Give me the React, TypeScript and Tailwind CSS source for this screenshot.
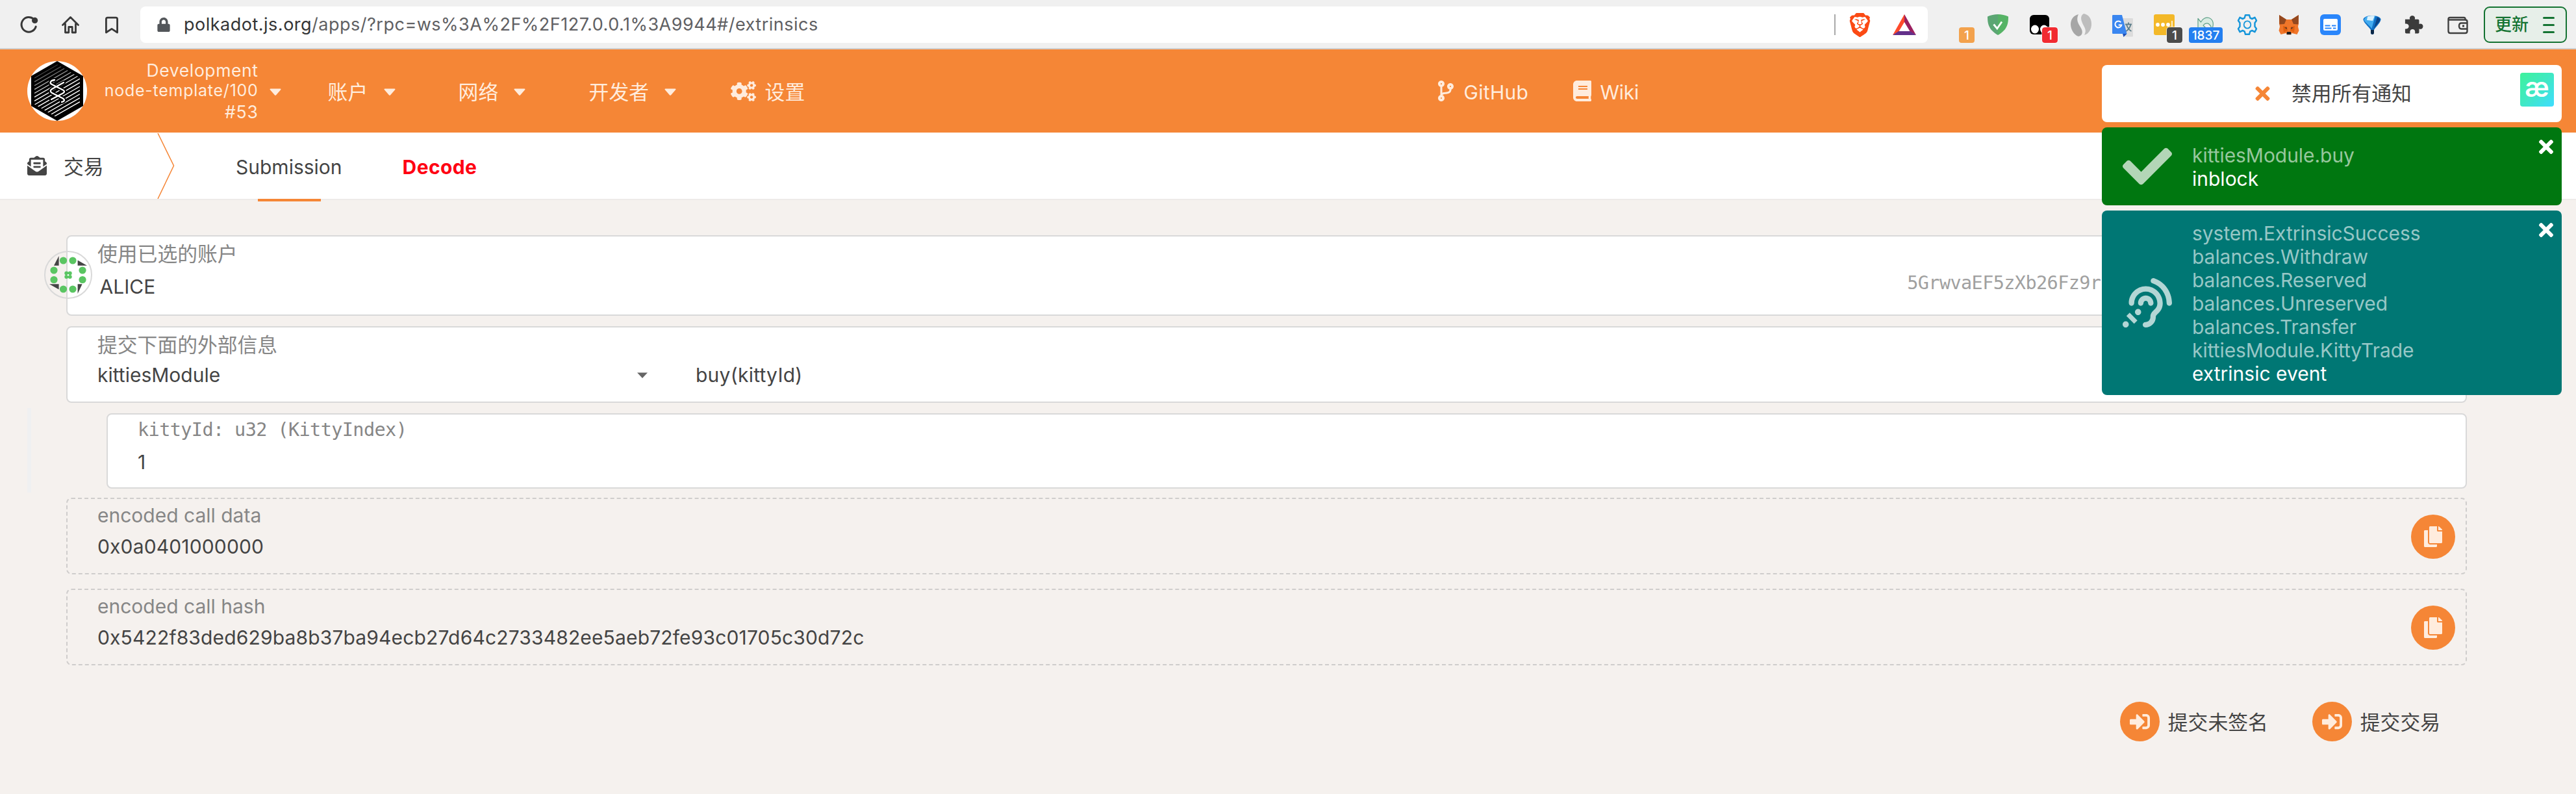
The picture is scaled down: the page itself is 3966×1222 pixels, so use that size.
import React from 'react';
import {
  FaAssistiveListeningSystems,
  FaBook,
  FaCheck,
  FaCodeBranch,
  FaCogs,
  FaCopy,
  FaEnvelopeOpenText,
  FaLock,
  FaSignInAlt,
  FaTimes,
} from 'react-icons/fa';
import { SiBrave } from 'react-icons/si';

const MONO = "font-['DejaVu_Sans_Mono',monospace] text-[28.5px] tracking-[-0.59px]";

/* ---------- browser toolbar ---------- */

function Slot({ children, className = '' }: { children?: React.ReactNode; className?: string }) {
  return <div className={`relative flex h-[76px] w-16 shrink-0 items-center justify-center ${className}`}>{children}</div>;
}

function Badge({ text, className }: { text: string; className: string }) {
  return (
    <span
      className={`absolute top-[42px] flex h-6 items-center justify-center rounded-[4px] pt-0.5 text-[19px] leading-6 font-medium text-white ${className}`}
    >
      {text}
    </span>
  );
}

function Toolbar() {
  return (
    <div className="flex h-[76px] items-center border-b-2 border-[#d0d0d0] bg-[#f0f0f0] pt-0.5">
      <svg className="ml-[29px] h-8 w-8 shrink-0" viewBox="0 0 32 32" fill="none">
        <path d="M23 7.500A11.300 11.300 0 1 0 26.200 19" stroke="#383838" strokeWidth="3" strokeLinecap="round" />
        <circle cx="24.6" cy="9.4" r="4.6" fill="#383838" />
      </svg>
      <svg
        className="ml-[32px] h-8 w-8 shrink-0"
        viewBox="0 0 32 32"
        fill="none"
        stroke="#383838"
        strokeWidth="2.8"
        strokeLinejoin="round"
        strokeLinecap="round"
      >
        <path d="M3.500 16.500 15.500 4.500 27.500 16.500M7.500 14v14h5.300v-8.500h5.400V28h5.300V14" />
      </svg>
      <svg className="ml-[32px] h-8 w-8 shrink-0" viewBox="0 0 32 32" fill="none" stroke="#383838" strokeWidth="2.8" strokeLinejoin="round">
        <path d="M6.400 7.400c0-1.500.8-2.300 2.300-2.300h12.600c1.500 0 2.300.8 2.300 2.300V28l-8.600-5.600L6.400 28Z" />
      </svg>

      <div className="ml-[27px] flex h-14 w-[2752px] shrink-0 items-center rounded-[8px] bg-white pr-[18px] pl-[26px]">
        <FaLock className="h-[22px] w-5 shrink-0 text-[#53565a]" />
        <span className="ml-[21px] text-[27px] leading-[40px] tracking-[0.5px] whitespace-nowrap text-[#5f6063]">
          <span className="text-[#333435]">polkadot.js.org</span>/apps/?rpc=ws%3A%2F%2F127.0.0.1%3A9944#/extrinsics
        </span>
        <span className="ml-auto h-8 w-0.5 bg-[#a9a9a9]" />
        <SiBrave className="ml-[19px] h-[37px] w-[37px] shrink-0 text-[#fb4a14]" />
        <svg className="ml-[32px] h-8 w-9 shrink-0" viewBox="0 0 36 32">
          <path d="M18 0 0 32l9-5 9-15Z" fill="#ff4a2b" />
          <path d="M18 0v12l9 15 9 5Z" fill="#9b1f5f" />
          <path d="M0 32h36l-9-6H9Z" fill="#63308a" />
        </svg>
      </div>

      <Slot className="ml-3">
        <Badge text="1" className="left-9 w-6 bg-[#f3a24d]" />
      </Slot>
      <Slot>
        <svg className="h-8 w-8" viewBox="0 0 32 32">
          <path d="M16 0C10.500 0 4.500 1.300 0 3.500c0 10 1 20 16 28.500Z" fill="#5ba673" />
          <path d="M16 0c5.500 0 11.500 1.300 16 3.500 0 10-1 20-16 28.500Z" fill="#56b366" />
          <path d="m9.500 15.500 5.300 6.500L22 11.500" fill="none" stroke="#fff" strokeWidth="2.8" />
        </svg>
      </Slot>
      <Slot>
        <svg className="h-8 w-8" viewBox="0 0 32 32">
          <rect x="1" y="1" width="30" height="30" rx="6" fill="#000" />
          <ellipse cx="9" cy="23" rx="6" ry="6.5" fill="#fff" />
          <ellipse cx="23" cy="23" rx="6" ry="6.5" fill="#fff" />
        </svg>
        <Badge text="1" className="left-9 w-6 bg-[#f12b31] outline-1 outline-white/60" />
      </Slot>
      <Slot>
        <svg className="h-[35px] w-8" viewBox="0 0 32 35">
          <path d="M12 1C4 3 0 9 0 16.500S5 33 12 35c5-1 7-5 5-10.500C14 17 7 12 12 1Z" fill="#a6a6a6" />
          <path d="M20 0c8 1.500 12 8 12 16s-4 15-11 17c3-6 2-9-1-14.500S13 4 20 0Z" fill="#bdbdbd" />
        </svg>
      </Slot>
      <Slot>
        <svg className="h-[37px] w-8" viewBox="0 0 32 37">
          <path d="M13 8h17.500c1 0 1.500.5 1.500 1.500V35c0 1-.5 1.500-1.500 1.500H20Z" fill="#dcdcdc" />
          <path
            d="M20 17.500h10M25 14.500v3M28.500 17.500c-1 5-4.500 9-8 11M22 18c1.500 4.500 4.500 8.500 7.500 10"
            fill="none"
            stroke="#5d7f8c"
            strokeWidth="1.8"
          />
          <path d="M1.500 3H15l7.500 29H1.500C.5 32 0 31.500 0 30.500v-26C0 3.500.5 3 1.500 3Z" fill="#3a86f0" />
          <path d="m16 32h6.500L17.500 37Z" fill="#1e4fb5" />
          <path d="M13.300 14.300a5 5 0 1 0 1 4.200H9.700" fill="none" stroke="#fff" strokeWidth="2" />
        </svg>
      </Slot>
      <Slot>
        <svg className="h-8 w-8" viewBox="0 0 32 32">
          <rect width="32" height="32" rx="3" fill="#f3b828" />
          <circle cx="6" cy="16" r="2.9" fill="#fff" />
          <circle cx="14" cy="16" r="2.9" fill="#fff" />
          <circle cx="22" cy="16" r="2.9" fill="#fff" />
          <path d="M28 10v9" stroke="#fff" strokeWidth="1.5" />
        </svg>
        <Badge text="1" className="left-9 w-6 bg-[#4b4b4b] outline-1 outline-white/60" />
      </Slot>
      <Slot>
        <svg className="-mt-1 h-[26px] w-[26px]" viewBox="0 0 26 26" strokeLinejoin="round">
          <path
            d="M1 5.500V21h13l-5-5c4-5 9-4 12 2 .8 2 1 3 1 5 4-8 3-16-4-18.500C13 3 8 6 5.500 11Z"
            fill="#d9ebe2"
            stroke="#5fa088"
            strokeWidth="1.2"
          />
        </svg>
        <Badge text="1837" className="left-1.5 w-[52px] bg-[#247ff0]" />
      </Slot>
      <Slot>
        <svg className="h-[36px] w-[34px]" viewBox="0 0 34 34" fill="none" stroke="#1495da" strokeWidth="2.4" strokeLinejoin="round" preserveAspectRatio="none">
          <path d="M14 3h6l1.300 4.200 3 1.300L28.500 6.500 31 11l-2.500 3.500v5L31 23l-2.500 4.500-4.200-2-3 1.300L20 31h-6l-1.300-4.200-3-1.300-4.200 2L3 23l2.500-3.500v-5L3 11l2.500-4.500 4.200 2 3-1.300Z" />
          <circle cx="17" cy="17" r="5.3" strokeWidth="1.8" />
        </svg>
      </Slot>
      <Slot>
        <svg className="h-8 w-8" viewBox="0 0 32 32">
          <path d="M1 1 12 8h8L31 1v13l-1 5 1.500 6-3 6-8-2-2 2h-5l-2-2-8 2-3-6L2 19l-1-5Z" fill="#f0762a" />
          <path d="M1 1 12 8 9 15 1.500 15.500ZM31 1 20 8l3 7 7.500.5Z" fill="#93481f" />
          <path d="m7 18 6 1 1 6-6 3ZM25 18l-6 1-1 6 6 3Z" fill="#e2600f" />
          <path d="m9 20 4 .5-.5 2.500ZM23 20l-4 .5.500 2.500Z" fill="#47342c" />
          <path d="M13 27h6l.5 4h-7Z" fill="#1d1d20" />
          <path d="M12 31h8l-1 1h-6Z" fill="#cdb9ac" />
        </svg>
      </Slot>
      <Slot>
        <svg className="h-8 w-8" viewBox="0 0 32 32">
          <rect width="32" height="32" rx="6" fill="#2a86fb" />
          <rect x="5" y="7" width="22" height="18" rx="2" fill="#fff" />
          <path d="M7.500 17.500h8M18 17.500h6.500M7.500 21.500h10M20 21.500h4.500" stroke="#2a86fb" strokeWidth="1.8" />
        </svg>
      </Slot>
      <Slot>
        <svg className="h-[30px] w-7" viewBox="0 0 28 30">
          <path d="M5 2.500C10 .5 18 .5 23 2.500c3 1.200 5 3 4.500 5C26 13 21 17 17 23v4c0 2-1 3-2.500 3S12 29 12 27v-4C8 17 2 13 .5 7.500.2 5.500 2 3.700 5 2.500Z" fill="#0f6fc4" />
          <path d="M4 3.500C8 1.500 14 1 19 1.500L16 12l-2.500 9C9 15 3 11.500 1.500 7.500Z" fill="#43acf0" />
          <path d="M7 2.500C11 1 15 1 18 1.500L15 9 6 8Z" fill="#dcf2fd" />
          <path d="M22 3.500c4 1.500 4.500 3 4 5C24.500 13 19 16.500 16.500 22Z" fill="#0b4386" />
          <path d="M12 23h5v4c0 2-1 3-2.500 3S12 29 12 27Z" fill="#0b2746" />
        </svg>
      </Slot>
      <Slot>
        <svg className="h-8 w-8" viewBox="0 0 32 32">
          <path
            d="M4 9h7.500a4.200 4.200 0 1 1 7.600 0H24c1.300 0 2 .8 2 2v5.300a4.200 4.200 0 1 1 0 7.400V29c0 1.300-.7 2-2 2h-4.500c.8-4.500-1-6.500-3.800-6.500S11 26.500 11.800 31H6c-1.300 0-2-.7-2-2v-5c4 0 5.800-1.800 5.800-4.200S8 15.800 4 15.800Z"
            fill="#3b3b3b"
            transform="translate(-1 -1) scale(.98)"
          />
        </svg>
      </Slot>
      <Slot className="ml-1">
        <svg className="h-8 w-8" viewBox="0 0 32 32" fill="none" stroke="#3f3f3f" strokeWidth="2.4">
          <path d="M27.500 8.500V7c0-1.300-1-2-2-2H4C2.500 5 1.500 6 1.500 7.500V26c0 2 1 3 3 3h23c2 0 3-1 3-3V11.500c0-2-1-3-3-3H2.500" />
          <path d="M31 13.500H21.500c-2 0-3.500 1.500-3.500 4.500s1.500 4.500 3.500 4.500H31" />
          <path d="M23 18h3" strokeWidth="3" />
        </svg>
      </Slot>
      <div className="ml-2 flex h-14 w-32 shrink-0 items-center rounded-[9px] border-2 border-[#147332] bg-[#e7efe9] pl-[15px] text-[#147332]">
        <span className="w-[52px] text-[26px] leading-8 font-medium whitespace-nowrap">更新</span>
        <span className="ml-[22px] flex flex-col gap-[8px]">
          <i className="h-[3px] w-[18px] rounded bg-[#147332]" />
          <i className="h-[3px] w-[18px] rounded bg-[#147332]" />
          <i className="h-[3px] w-[18px] rounded bg-[#147332]" />
        </span>
      </div>
    </div>
  );
}

/* ---------- orange header ---------- */

const LINES = Array.from({ length: 19 }, (_, i) => 8 + i * 5.9);

const STRAND_A = 'M42 29c-7 1-8 5-4 7l16 8c4 2 4 4 0 6l-17 9';
const STRAND_B = 'M56 33 38 43c-3 2-3 4 0 6l16 8c4 2 4 5-1 6';

function Logo() {
  return (
    <svg className="h-[92px] w-[92px] shrink-0" viewBox="0 0 92 92">
      <defs>
        <clipPath id="hex-inner">
          <path d="M46 5 81 25.500v41L46 87 11 66.500v-41Z" />
        </clipPath>
        <linearGradient id="stripe" gradientUnits="userSpaceOnUse" x1="30" y1="8" x2="44" y2="44">
          <stop offset="0" stopColor="#fff" stopOpacity="0.1" />
          <stop offset="1" stopColor="#fff" />
        </linearGradient>
      </defs>
      <circle cx="46" cy="46" r="46" fill="#fff" />
      <path d="M46 0 86 23v46L46 92 6 69V23Z" fill="#000" />
      <g clipPath="url(#hex-inner)" stroke="url(#stripe)" strokeWidth="1.4">
        {LINES.map((y) => (
          <path key={y} d={`M11 ${y + 12}L81 ${y - 28}`} />
        ))}
      </g>
      <g fill="none" strokeLinecap="round" strokeLinejoin="round">
        <path d={STRAND_A + STRAND_B} stroke="#000" strokeWidth="6" />
        <path d={STRAND_A + STRAND_B} stroke="#fff" strokeWidth="2.3" />
      </g>
    </svg>
  );
}

function Caret({ className }: { className: string }) {
  return (
    <svg className={`h-3 w-[18px] shrink-0 ${className}`} viewBox="0 0 18 12">
      <path d="M1.500.5h15c1 0 1.300 1 .6 1.700l-7 8c-.7.7-1.500.7-2.200 0l-7-8C.2 1.500.5.5 1.500.5Z" fill="currentColor" />
    </svg>
  );
}

const navText = 'shrink-0 pt-1 text-[30.8px] leading-10 whitespace-nowrap';

function Header() {
  return (
    <header className="flex h-32 items-center bg-[#f58636] pl-[42px] text-[#ffecdd]">
      <Logo />
      <div className="w-[263.6px] shrink-0 pt-0.5 text-right text-[26.5px] whitespace-nowrap">
        <div className="h-8 leading-8 tracking-[0.6px]">Development</div>
        <div className="h-[30px] text-[25px] leading-[30px] tracking-[0.75px]">node-template/100</div>
        <div className="h-9 leading-9 tracking-[0.8px]">#53</div>
      </div>
      <Caret className="mt-1 ml-[17px]" />
      <span className={`ml-[72px] w-[62px] ${navText}`}>账户</span>
      <Caret className="mt-1 ml-6" />
      <span className={`ml-[97px] w-[62px] ${navText}`}>网络</span>
      <Caret className="mt-1 ml-[23px]" />
      <span className={`ml-[98px] w-[93px] ${navText}`}>开发者</span>
      <Caret className="mt-1 ml-[23px]" />
      <FaCogs className="ml-[84px] h-[31px] w-[39px] shrink-0" />
      <span className={`ml-[14px] w-[62px] ${navText}`}>设置</span>
      <FaCodeBranch className="ml-[974px] h-8 w-6 shrink-0" />
      <span className="ml-[16px] w-[98px] shrink-0 pt-1 text-[30px] leading-10 tracking-[0.3px]">GitHub</span>
      <FaBook className="ml-[70px] h-8 w-7 shrink-0" />
      <span className="ml-[14px] shrink-0 pt-1 text-[30px] leading-10 tracking-[-0.3px]">Wiki</span>
    </header>
  );
}

/* ---------- tabs ---------- */

function Tabs() {
  return (
    <nav className="flex h-[104px] items-stretch border-b-2 border-[#eeebe9] bg-white pl-[42px] text-[#444]">
      <div className="flex items-center">
        <FaEnvelopeOpenText className="h-[30px] w-[30px] shrink-0" />
        <span className="ml-[26px] w-[62px] pt-[3px] text-[30.8px] leading-10 whitespace-nowrap">交易</span>
      </div>
      <svg className="mt-px ml-[82px] h-[101px] w-7 shrink-0" viewBox="0 0 28 101" fill="none">
        <path d="M1 0 25.500 50 1 101" stroke="#f58636" strokeWidth="1.5" />
      </svg>
      <div className="relative ml-[93px] flex items-center pt-1 text-[30px]">
        Submission
        <span className="absolute -bottom-1 left-[34px] h-1 w-[97px] bg-[#f58636]" />
      </div>
      <div className="ml-[93px] flex items-center pt-1 text-[30px] font-bold tracking-[0.4px] text-[#ff0012]">Decode</div>
    </nav>
  );
}

/* ---------- form ---------- */

const RING = [
  [97.5, 401],
  [112, 401],
  [83, 416],
  [127, 416],
  [83, 430.5],
  [127, 430.5],
  [97.5, 445],
  [112, 445],
];
const CORE = [
  [102.3, 420.5],
  [107.7, 420.5],
  [102.3, 426],
  [107.7, 426],
];

function Identicon() {
  return (
    <svg className="absolute top-[22px] -left-9 h-[74px] w-[74px]" viewBox="68 386 74 74">
      <circle cx="105" cy="423" r="36" fill="none" stroke="#d9d9d9" strokeWidth="2" />
      <path
        d="M83 408.700 90.600 394v14.700ZM119.600 400.500l14.400 8.200h-14.400ZM76 437.300h14.600v8.200ZM119.600 437.300h7L119.600 452Z"
        fill="#444"
      />
      {RING.map(([x, y]) => (
        <circle key={`${x}-${y}`} cx={x} cy={y} r="5.6" fill="#5ac562" />
      ))}
      {CORE.map(([x, y]) => (
        <circle key={`${x}-${y}`} cx={x} cy={y} r="3" fill="#5ac562" />
      ))}
      <circle cx="105" cy="423.2" r="1.3" fill="#fff" />
    </svg>
  );
}

const card = 'relative rounded-[8px] border-2 border-[#d9d9d9] bg-white pl-[46px]';
const label = 'h-[30px] leading-[30px] whitespace-nowrap text-[#868686]';
const value = 'h-[30px] text-[30px] leading-[30px] whitespace-nowrap text-[#444]';

function Output({ title, text, className }: { title: string; text: string; className: string }) {
  return (
    <div className={`relative h-[118px] rounded-[8px] border-2 border-dashed border-[#cfcdcc] pt-[10px] pl-[46px] ${className}`}>
      <div className={`${label} text-[30px]`}>{title}</div>
      <div className={`mt-[18px] tracking-[0.15px] ${value}`}>{text}</div>
      <button className="absolute top-6 right-4 flex h-[68px] w-[68px] items-center justify-center rounded-full bg-[#f58636] text-[#ffecdd]">
        <FaCopy className="h-8 w-7" />
      </button>
    </div>
  );
}

function Action({ text, className = '' }: { text: string; className?: string }) {
  return (
    <button className={`flex h-[61px] shrink-0 items-center ${className}`}>
      <span className="flex h-[61px] w-[61px] items-center justify-center rounded-full bg-[#f58636] text-[#ffecdd]">
        <FaSignInAlt className="h-[31px] w-[31px]" />
      </span>
      <span className="ml-[13px] pt-0.5 text-[30.8px] leading-10 whitespace-nowrap text-[#444]">{text}</span>
    </button>
  );
}

function Form() {
  return (
    <main className="flex w-[3798px] flex-col pt-[54px] pl-[102px]">
      <section className={`${card} h-[124px] pt-3`}>
        <Identicon />
        <div className={`${label} text-[30.8px]`}>使用已选的账户</div>
        <div className={`mt-5 flex pl-[3.5px] ${value}`}>
          ALICE
          <span className={`ml-[2697px] leading-5 text-[#a0a0a0] ${MONO}`}>5GrwvaEF5zXb26Fz9r</span>
        </div>
      </section>

      <section className={`${card} mt-4 h-[118px] pt-3`}>
        <div className={`${label} text-[30.8px]`}>提交下面的外部信息</div>
        <div className={`mt-4 flex items-center ${value}`}>
          <span className="w-[831px]">kittiesModule</span>
          <svg className="h-[9px] w-4" viewBox="0 0 16 9">
            <path d="M0 .5h16L8 9Z" fill="#666" />
          </svg>
          <span className="ml-[74px] tracking-[0.25px]">buy(kittyId)</span>
        </div>
      </section>

      <div className="relative">
        <span className="absolute top-2 -left-[60px] h-[130px] w-1.5 bg-[#eff0f1]" />
        <section className="relative mt-4 ml-[62px] h-[116px] rounded-[8px] border-2 border-[#d9d9d9] bg-white pt-[9px] pl-[46px]">
          <div className={`${label} ${MONO}`}>kittyId: u32 (KittyIndex)</div>
          <div className={`mt-[19px] ${value}`}>1</div>
        </section>
      </div>

      <Output className="mt-[14px]" title="encoded call data" text="0x0a0401000000" />
      <Output
        className="mt-[22px]"
        title="encoded call hash"
        text="0x5422f83ded629ba8b37ba94ecb27d64c2733482ee5aeb72fe93c01705c30d72c"
      />

      <div className="mt-14 flex justify-end pr-[41px]">
        <Action text="提交未签名" />
        <Action text="提交交易" className="ml-[68px]" />
      </div>
    </main>
  );
}

/* ---------- notifications ---------- */

function Toast({ icon, lines, status, className }: { icon: React.ReactNode; lines: string[]; status: string; className: string }) {
  return (
    <div className={`relative flex items-center rounded-[8px] pl-8 text-white ${className}`}>
      <span className="w-[76px] text-white/70">{icon}</span>
      <div className="ml-[31px] pt-0.5 text-[30px] leading-9">
        {lines.map((line) => (
          <div key={line} className="tracking-[-0.05px] text-white/60">
            {line}
          </div>
        ))}
        <div>{status}</div>
      </div>
      <FaTimes className="absolute top-[14px] right-3 h-8 w-[24px]" />
    </div>
  );
}

function Notifications() {
  return (
    <aside className="absolute top-[100px] right-[22px] flex w-[708px] flex-col gap-2">
      <div className="relative flex h-[88px] items-center rounded-[8px] bg-white pl-[236px] text-[#444]">
        <FaTimes className="h-8 w-[23px] text-[#f58636]" />
        <span className="ml-[33px] w-[187px] text-[30.8px] leading-10 whitespace-nowrap">禁用所有通知</span>
        <span className="absolute top-3 right-3 flex h-[52px] w-[52px] justify-center rounded-[4px] bg-linear-to-br from-[#3df29a] via-[#40e8c4] to-[#3fdcff] text-[41px] leading-[45px] font-semibold text-white">
          æ
        </span>
      </div>
      <Toast
        className="h-[120px] bg-[#007710]"
        icon={<FaCheck className="h-[76px] w-[76px]" />}
        lines={['kittiesModule.buy']}
        status="inblock"
      />
      <Toast
        className="h-[284px] bg-[#007774]"
        icon={<FaAssistiveListeningSystems className="h-[76px] w-[76px]" />}
        lines={[
          'system.ExtrinsicSuccess',
          'balances.Withdraw',
          'balances.Reserved',
          'balances.Unreserved',
          'balances.Transfer',
          'kittiesModule.KittyTrade',
        ]}
        status="extrinsic event"
      />
    </aside>
  );
}

export default function App() {
  return (
    <div className="relative h-[1222px] w-[3966px] overflow-hidden bg-[#f5f1ee] font-['Inter','Noto_Sans_CJK_SC',sans-serif]">
      <Toolbar />
      <Header />
      <Tabs />
      <Form />
      <Notifications />
    </div>
  );
}
